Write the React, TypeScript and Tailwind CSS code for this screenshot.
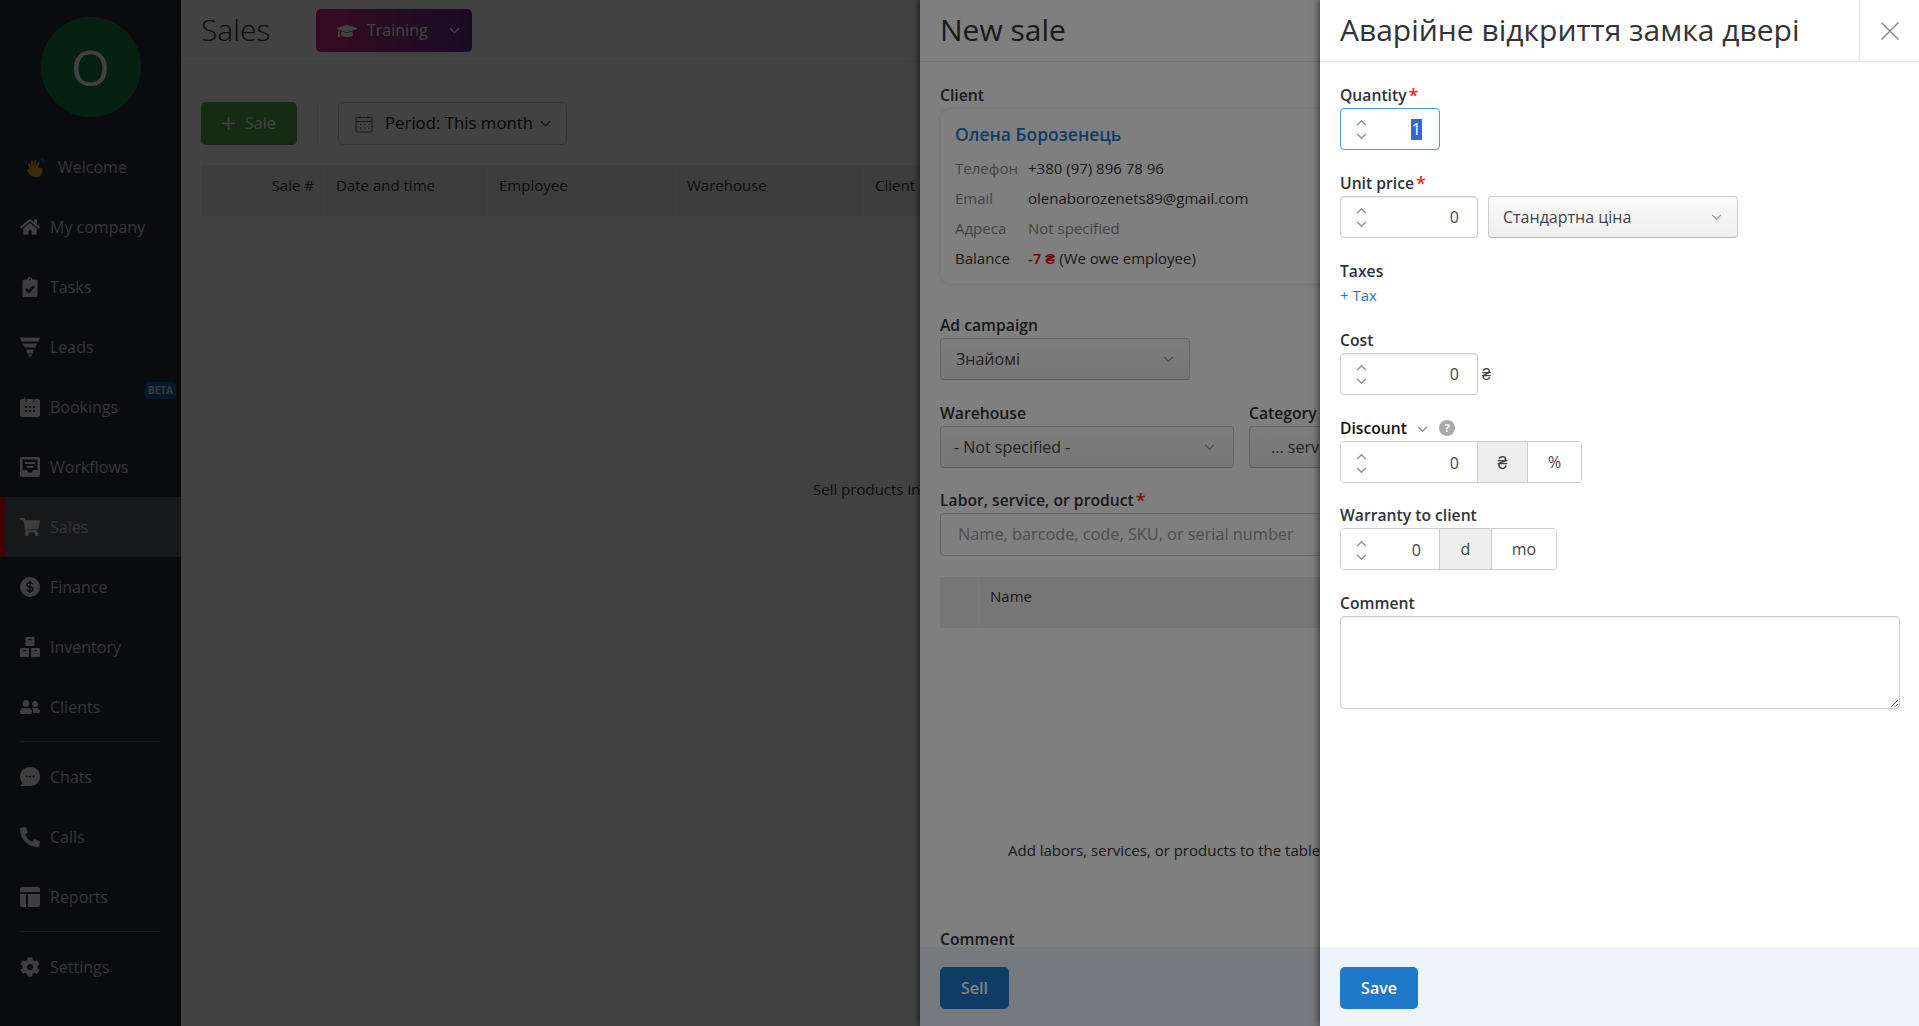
import React from "react";
import { FaHome, FaClipboardCheck, FaShoppingCart, FaUserFriends, FaPhoneAlt, FaCog, FaGraduationCap } from "react-icons/fa";

const Chevron = ({ className = "", up = false }: { className?: string; up?: boolean }) => (
  <svg viewBox="0 0 12 8" className={className} fill="none" stroke="currentColor" strokeWidth="1.5">
    <path d={up ? "M1 7l5-5 5 5" : "M1 1l5 5 5-5"} />
  </svg>
);

const Funnel = () => (
  <svg viewBox="0 0 20 20" className="w-5 h-5" fill="currentColor">
    <path d="M0 0.5h20l-1.6 4H1.6zM3 6.5h14l-1.6 4H4.6zM6 12.5h8l-1.6 4H7.6zM8 17.5h4l-.6 2H8.6z" />
  </svg>
);
const CalIcon = () => (
  <svg viewBox="0 0 20 20" className="w-5 h-5" fill="currentColor">
    <path d="M2 2h2.5V0.5h1V5h1V2h7V.5h0V5h1V2H18a2 2 0 0 1 2 2v14a2 2 0 0 1-2 2H2a2 2 0 0 1-2-2V4a2 2 0 0 1 2-2z" />
    <g fill="#262c38"><rect x="5" y="9" width="2" height="2" /><rect x="9" y="9" width="2" height="2" /><rect x="13" y="9" width="2" height="2" /><rect x="5" y="13" width="2" height="2" /><rect x="9" y="13" width="2" height="2" /><rect x="13" y="13" width="2" height="2" /></g>
  </svg>
);
const Inbox = () => (
  <svg viewBox="0 0 20 20" className="w-5 h-5" fill="currentColor">
    <path fillRule="evenodd" d="M2 0h16a2 2 0 0 1 2 2v16a2 2 0 0 1-2 2H2a2 2 0 0 1-2-2V2a2 2 0 0 1 2-2zm.5 2.5v10.5h4.5l1 2.5h4l1-2.5h4.500V2.500zM5 5h10v2H5zm1.500 4h7v2h-7z" />
  </svg>
);
const Dollar = () => (
  <svg viewBox="0 0 20 20" className="w-5 h-5">
    <circle cx="10" cy="10" r="10" fill="currentColor" />
    <path d="M13 7.300C12.600 6.200 11.500 5.800 10 5.800c-1.700 0-3 .8-3 2.100 0 2.900 6 1.500 6 4.200 0 1.300-1.300 2.100-3 2.100-1.600 0-2.700-.6-3.100-1.800M10 4v12" fill="none" stroke="#262c38" strokeWidth="1.500" />
  </svg>
);
const Boxes = () => (
  <svg viewBox="0 0 20 20" className="w-5 h-5" fill="currentColor">
    <path fillRule="evenodd" d="M6.500 0h7a1 1 0 0 1 1 1v7a1 1 0 0 1-1 1h-7a1 1 0 0 1-1-1V1a1 1 0 0 1 1-1zM8.500 2v1.200h3V2zM1 11h7a1 1 0 0 1 1 1v7a1 1 0 0 1-1 1H1a1 1 0 0 1-1-1v-7a1 1 0 0 1 1-1zm2.500 2v1.200h2.500V13zM12 11h7a1 1 0 0 1 1 1v7a1 1 0 0 1-1 1h-7a1 1 0 0 1-1-1v-7a1 1 0 0 1 1-1zm2.500 2v1.200H17V13z" />
  </svg>
);
const ChatDots = () => (
  <svg viewBox="0 0 20 20" className="w-5 h-5" fill="currentColor">
    <path d="M10.500 0C16 0 20 4 20 9.500S16 19 10.500 19H0c1.300-1 2-2 2.200-3.300C.8 14 0 12 0 9.500 0 4 5 0 10.500 0z" />
    <g fill="#262c38"><circle cx="6.500" cy="9.500" r="1" /><circle cx="10" cy="9.500" r="1" /><circle cx="13.500" cy="9.500" r="1" /></g>
  </svg>
);
const TableIcon = () => (
  <svg viewBox="0 0 20 20" className="w-5 h-5" fill="currentColor">
    <path d="M2 0h16a2 2 0 0 1 2 2v3H0V2a2 2 0 0 1 2-2zM0 7h6v13H2a2 2 0 0 1-2-2zM8 7h12v11a2 2 0 0 1-2 2H8z" />
  </svg>
);
const Hand = () => (
  <svg viewBox="0 0 22 22" className="w-[21px] h-[21px]">
    <path d="M7 20c-2-1-4-4-5-6-.6-1 .6-2 1.600-1.200L5 14 3.500 8c-.3-1.300 1.500-1.800 2-.6L7 11 6.300 4.800c-.2-1.300 1.700-1.600 2-.3l1.200 5.500.2-6c0-1.300 1.900-1.300 2 0l.3 6 1.200-4c.4-1.200 2.100-.7 1.900.5L14 12c2-1 3-1 4 .5.200 1 .5 5-2 7.500-2 1.500-6 1.500-9 0z" fill="#f0a32a" />
    <path d="M1 7c.3-1.500 1-2.500 2-3M17.500 2c1 .4 2 1.400 2.300 2.500" stroke="#5a8fd0" strokeWidth="1" fill="none" />
  </svg>
);

const items: [string, React.ReactNode][] = [
  ["My company", <FaHome className="w-5 h-5" />],
  ["Tasks", <FaClipboardCheck className="w-5 h-5" />],
  ["Leads", <Funnel />],
  ["Bookings", <CalIcon />],
  ["Workflows", <Inbox />],
  ["Sales", <FaShoppingCart className="w-5 h-5" />],
  ["Finance", <Dollar />],
  ["Inventory", <Boxes />],
  ["Clients", <FaUserFriends className="w-5 h-5" />],
];

const NavItem = ({ label, icon, active, badge }: { label: string; icon: React.ReactNode; active?: boolean; badge?: boolean }) => (
  <div className={`relative h-[60px] flex items-center pl-5 gap-[10px] text-[16px] ${active ? "bg-[#585c64]" : ""}`}>
    {active && <div className="absolute left-0 top-0 bottom-0 w-[5px] bg-[#f01010]" />}
    <span className="text-[#eeeeee] w-5 h-5 flex">{icon}</span>
    <span className="text-[#cfcfcf]">{label}</span>
    {badge && (
      <span className="absolute left-[145px] top-[5px] w-[31px] h-[17px] rounded-[3px] bg-[#1a62b0] text-[#e0e0e0] text-[10px] font-bold flex items-center justify-center">BETA</span>
    )}
  </div>
);
const Divider = () => <div className="mx-5 mt-[4px] mb-[5px] h-px bg-[#5a5f68]" />;

const Sidebar = () => (
  <div className="w-[181px] shrink-0 h-full bg-[#262c38] pt-[17px]">
    <div className="w-[100px] h-[100px] mx-auto rounded-full bg-[#1a8045] text-white text-[50px] flex items-center justify-center mb-[20px]">O</div>
    <div className="relative h-[60px] flex items-center pl-[25px] gap-[10px] text-[16px]">
      <Hand />
      <span className="text-[#cfcfcf] ml-[2px]">Welcome</span>
    </div>
    {items.map(([l, i]) => (
      <NavItem key={l} label={l} icon={i} active={l === "Sales"} badge={l === "Bookings"} />
    ))}
    <Divider />
    <NavItem label="Chats" icon={<ChatDots />} />
    <NavItem label="Calls" icon={<FaPhoneAlt className="w-5 h-5" />} />
    <NavItem label="Reports" icon={<TableIcon />} />
    <Divider />
    <NavItem label="Settings" icon={<FaCog className="w-5 h-5" />} />
  </div>
);

const Th = ({ w, children, right }: { w: string; children: React.ReactNode; right?: boolean }) => (
  <div className={`${w} shrink-0 h-full border-r border-[#f7f7f7] pt-[9px] px-[10px] leading-[22px] ${right ? "text-right" : "pl-[11px]"}`}>{children}</div>
);

const Main = () => (
  <div className="flex-1 min-w-0 h-full bg-[#ffffff] text-[#222222]">
    <div className="h-[62px] border-b border-[#f2f2f2] flex items-center pl-5 bg-white">
      <div className="text-[30px] font-light text-[#333333] w-[115px] pb-[2px]">Sales</div>
      <div className="h-[43px] w-[156px] rounded-[5px] bg-gradient-to-r from-[#d0247f] to-[#5f2a8a] text-white text-[16px] flex items-center pl-[21px]">
        <FaGraduationCap className="w-5 h-5 mr-[10px]" />
        <span className="pb-[1px]">Training</span>
        <Chevron className="w-[11px] h-[8px] ml-[21px]" />
      </div>
    </div>
    <div className="flex items-center mt-[40px] pl-5">
      <div className="h-[43px] w-[96px] rounded-[5px] bg-[#55a84c] text-white text-[16px] flex items-center pl-[21px] gap-[10px]">
        <svg viewBox="0 0 14 14" className="w-[13px] h-[13px]" stroke="currentColor" strokeWidth="1.800" fill="none"><path d="M7 0v14M0 7h14" /></svg>
        <span className="pb-[2px]">Sale</span>
      </div>
      <div className="w-px h-[43px] bg-[#dddddd] mx-[20px]" />
      <div className="h-[43px] w-[229px] rounded-[5px] border border-[#cccccc] flex items-center pl-[16px] text-[16.8px] text-[#222222]">
        <svg viewBox="0 0 18 18" className="w-[18px] h-[18px] mr-[12px]" fill="none" stroke="#666666" strokeWidth="1.200">
          <rect x="1" y="2.500" width="16" height="14.500" rx="1.500" />
          <path d="M1 6.500h16M5 .5v3M13 .5v3M5 9.500h1.500M9 9.500h1.500M13 9.500h1.500M5 13h1.500M9 13h1.500M13 13h1.500" />
        </svg>
        <span className="pb-[1px]">Period: This month</span>
        <Chevron className="w-[11px] h-[8px] ml-[7px] text-[#555555]" />
      </div>
    </div>
    <div className="ml-5 mt-[20px] h-[51px] bg-[#ececec] flex text-[15px] text-[#333333]">
      <Th w="w-[124px]" right>Sale #</Th>
      <Th w="w-[163px]">Date and time</Th>
      <Th w="w-[188px]">Employee</Th>
      <Th w="w-[188px]">Warehouse</Th>
      <Th w="w-[300px]">Client</Th>
    </div>
    <div className="mt-[262px] pl-[632px] text-[15px] text-[#333333] whitespace-nowrap">Sell products in bulk</div>
  </div>
);

const Label = ({ children, req, dark }: { children: React.ReactNode; req?: boolean; dark?: boolean }) => (
  <div className={`h-[22px] leading-[19px] text-[15.7px] font-semibold whitespace-nowrap ${dark ? "text-[#111111]" : "text-[#2f3338]"}`}>
    {children}
    {req && <span className="text-[#ff1a1a] text-[18px] leading-[18px] ml-[2px] align-top">*</span>}
  </div>
);

const Stepper = ({ w, value, focus, group }: { w: string; value: string; focus?: boolean; group?: boolean }) => (
  <div className={`${w} h-[42px] bg-white flex items-center justify-between pl-[15px] text-[16px] text-[#444444] ${focus ? "border border-[#4a9be0] rounded-[4px] pr-[17px]" : group ? "pr-[18px]" : "border border-[#cccccc] rounded-[4px] pr-[18px] shadow-[inset_0_1px_2px_rgba(0,0,0,0.1)]"}`}>
    <div className="flex flex-col gap-[7px] text-[#8a8a8a]">
      <Chevron up className="w-[11px] h-[7px]" />
      <Chevron className="w-[11px] h-[7px]" />
    </div>
    {focus ? <span className="bg-[#3367d6] text-white leading-[21px] px-[1px]">{value}</span> : <span>{value}</span>}
  </div>
);

const Select = ({ w, text, pl = "pl-[15px]", pr = "pr-[15px]" }: { w: string; text: string; pl?: string; pr?: string }) => (
  <div className={`${w} ${pl} ${pr} h-[42px] rounded-[4px] border border-[#cccccc] border-b-[#b5b5b5] bg-gradient-to-b from-[#fafafa] to-[#eeeeee] flex items-center justify-between text-[16px] text-[#444444] shrink-0 whitespace-nowrap`}>
    <span>{text}</span>
    <Chevron className="w-[11px] h-[7px] text-[#9a9a9a]" />
  </div>
);

const Seg = ({ w, children, active }: { w: string; children: React.ReactNode; active?: boolean }) => (
  <div className={`${w} h-full flex items-center justify-center border-l border-[#cccccc] text-[16px] text-[#444444] ${active ? "bg-[#eeeeee]" : "bg-white"}`}>{children}</div>
);

const Row = ({ k, v, muted }: { k: string; v: React.ReactNode; muted?: boolean }) => (
  <div className="flex h-[30px] items-center text-[15px] whitespace-nowrap">
    <div className={`w-[73px] shrink-0 ${k === "Balance" ? "text-[#333333]" : "text-[#888888]"}`}>{k}</div>
    <div className={muted ? "text-[#888888]" : "text-[#333333]"}>{v}</div>
  </div>
);

const PanelHeader = ({ title, close }: { title: string; close?: boolean }) => (
  <div className="h-[62px] shrink-0 border-b border-[#e8e8e8] flex items-center">
    <div className="flex-1 pl-5 pb-[2px] text-[30px] text-[#333333] whitespace-nowrap">{title}</div>
    {close && (
      <div className="w-[60px] h-full border-l border-[#e8e8e8] flex items-center justify-center">
        <svg viewBox="0 0 20 20" className="w-5 h-5" stroke="#888888" strokeWidth="1.500" fill="none"><path d="M1.500 1.500l17 17M18.500 1.500l-17 17" /></svg>
      </div>
    )}
  </div>
);

const SalePanel = () => (
  <div className="absolute left-[920px] top-0 bottom-0 w-[999px] bg-white flex flex-col shadow-[-2px_0_6px_rgba(0,0,0,0.5)]">
    <PanelHeader title="New sale" />
    <div className="flex-1 overflow-hidden px-5 pt-[24px]">
      <Label>Client</Label>
      <div className="w-[560px] h-[176px] rounded-[10px] border border-[#eeeeee] shadow-[0_1px_4px_rgba(0,0,0,0.12)] px-[14px] pt-[9px]">
        <div className="h-[33px] flex items-center text-[17.5px] font-semibold text-[#1f79c9] mb-[2px] whitespace-nowrap">Олена Борозенець</div>
        <Row k="Телефон" v="+380 (97) 896 78 96" />
        <Row k="Email" v="olenaborozenets89@gmail.com" />
        <Row k="Адреса" v="Not specified" muted />
        <Row k="Balance" v={<><span className="text-[#e01010] font-semibold">-7 ₴</span> (We owe employee)</>} />
      </div>
      <div className="mt-[32px]"><Label>Ad campaign</Label></div>
      <Select w="w-[250px]" text="Знайомі" />
      <div className="flex gap-[15px] mt-[24px]">
        <div>
          <Label>Warehouse</Label>
          <Select w="w-[294px]" text="- Not specified -" pl="pl-[13px]" pr="pr-[18px]" />
        </div>
        <div>
          <Label>Category</Label>
          <Select w="w-[300px]" text="... services" pl="pl-[21px]" />
        </div>
      </div>
      <div className="mt-[23px]"><Label req>Labor, service, or product</Label></div>
      <div className="w-[800px] h-[43px] rounded-[4px] border border-[#cccccc] flex items-center pl-[17px] text-[16.3px] text-[#9a9a9a] whitespace-nowrap">Name, barcode, code, SKU, or serial number</div>
      <div className="mt-[21px] h-[51px] bg-[#ececec] flex text-[15px] text-[#333333]">
        <div className="w-[39px] border-r border-[#f7f7f7]" />
        <div className="pl-[11px] pt-[8px] leading-[22px]">Name</div>
      </div>
      <div className="mt-[211px] pl-[68px] h-[22px] leading-[22px] text-[15px] text-[#333333] whitespace-nowrap">Add labors, services, or products to the table</div>
      <div className="mt-[70px] h-[16px] leading-[16px] text-[15.7px] font-semibold text-[#2f3338]">Comment</div>
    </div>
    <div className="h-[79px] shrink-0 bg-[#edf3fb] px-5 pt-[20px]">
      <div className="w-[69px] h-[42px] rounded-[5px] bg-[#1f79c9] text-white text-[16px] font-semibold flex items-center justify-center">Sell</div>
    </div>
  </div>
);

const ItemPanel = () => (
  <div className="absolute left-[1320px] top-0 bottom-0 w-[599px] bg-white flex flex-col shadow-[-2px_0_6px_rgba(0,0,0,0.5)]">
    <PanelHeader title="Аварійне відкриття замка двері" close />
    <div className="flex-1 overflow-hidden px-5 pt-[24px] flex flex-col">
      <Label req>Quantity</Label>
      <div className="mb-[24px]"><Stepper w="w-[100px]" value="1" focus /></div>
      <Label req>Unit price</Label>
      <div className="flex gap-[10px] mb-[24px]">
        <Stepper w="w-[138px]" value="0" />
        <Select w="w-[250px]" text="Стандартна ціна" pl="pl-[14px]" />
      </div>
      <Label>Taxes</Label>
      <div className="h-[22px] leading-[23px] text-[15px] text-[#1f79c9] mb-[25px]">+ Tax</div>
      <Label>Cost</Label>
      <div className="flex items-center gap-[3px] mb-[24px]">
        <Stepper w="w-[138px]" value="0" />
        <span className="text-[16px] text-[#444444] ml-[1px]">₴</span>
      </div>
      <div className="h-[22px] flex items-start">
        <Label dark>Discount</Label>
        <Chevron className="w-[11px] h-[7px] mt-[7px] ml-[10px] text-[#8a8a8a]" />
        <span className="ml-[11px] mt-[1px] w-[16px] h-[16px] rounded-full bg-[#aaaaaa] text-white text-[11px] font-bold flex items-center justify-center">?</span>
      </div>
      <div className="w-[242px] h-[42px] border border-[#cccccc] rounded-[4px] overflow-hidden flex mb-[23px]">
        <Stepper w="w-[136px]" value="0" group />
        <Seg w="w-[50px]" active><span className="text-[18px]">₴</span></Seg>
        <Seg w="flex-1">%</Seg>
      </div>
      <Label>Warranty to client</Label>
      <div className="w-[217px] h-[42px] border border-[#cccccc] rounded-[4px] overflow-hidden flex mb-[24px]">
        <Stepper w="w-[98px]" value="0" group />
        <Seg w="w-[52px]" active>d</Seg>
        <Seg w="flex-1">mo</Seg>
      </div>
      <Label>Comment</Label>
      <textarea readOnly className="block w-[560px] h-[93px] border border-[#cccccc] rounded-[4px] resize-y outline-none shadow-[inset_0_1px_2px_rgba(0,0,0,0.08)]" />
    </div>
    <div className="h-[79px] shrink-0 bg-[#edf3fb] px-5 pt-[20px]">
      <div className="w-[78px] h-[42px] rounded-[5px] bg-[#1f79c9] text-white text-[16px] font-semibold flex items-center justify-center">Save</div>
    </div>
  </div>
);

export default function App() {
  return (
    <div className="relative w-full h-screen overflow-hidden flex font-['Open_Sans',sans-serif]">
      <Sidebar />
      <Main />
      <div className="absolute inset-0 bg-black/[0.48]" />
      <SalePanel />
      <div className="absolute inset-0 bg-black/50" />
      <ItemPanel />
    </div>
  );
}
